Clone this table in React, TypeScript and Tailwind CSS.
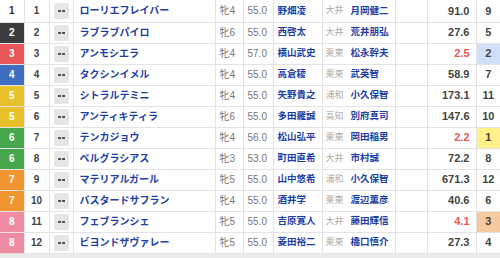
import React from 'react';

interface Runner {
  waku: number;
  num: number;
  name: string;
  sex: string;
  weight: string;
  jockey: string;
  region: string;
  trainer: string;
  odds: string;
  pop: number;
}

const runners: Runner[] = [
  { waku: 1, num: 1, name: 'ローリエフレイバー', sex: '牝4', weight: '55.0', jockey: '野畑凌', region: '大井', trainer: '月岡健二', odds: '91.0', pop: 9 },
  { waku: 2, num: 2, name: 'ラブラブパイロ', sex: '牝6', weight: '55.0', jockey: '西啓太', region: '大井', trainer: '荒井朋弘', odds: '27.6', pop: 5 },
  { waku: 3, num: 3, name: 'アンモシエラ', sex: '牝4', weight: '57.0', jockey: '横山武史', region: '栗東', trainer: '松永幹夫', odds: '2.5', pop: 2 },
  { waku: 4, num: 4, name: 'タクシンイメル', sex: '牝4', weight: '55.0', jockey: '高倉稜', region: '栗東', trainer: '武英智', odds: '58.9', pop: 7 },
  { waku: 5, num: 5, name: 'シトラルテミニ', sex: '牝4', weight: '55.0', jockey: '矢野貴之', region: '浦和', trainer: '小久保智', odds: '173.1', pop: 11 },
  { waku: 5, num: 6, name: 'アンティキティラ', sex: '牝6', weight: '55.0', jockey: '多田羅誠', region: '高知', trainer: '別府真司', odds: '147.6', pop: 10 },
  { waku: 6, num: 7, name: 'テンカジョウ', sex: '牝4', weight: '56.0', jockey: '松山弘平', region: '栗東', trainer: '岡田稲男', odds: '2.2', pop: 1 },
  { waku: 6, num: 8, name: 'ベルグラシアス', sex: '牝3', weight: '53.0', jockey: '町田直希', region: '大井', trainer: '市村誠', odds: '72.2', pop: 8 },
  { waku: 7, num: 9, name: 'マテリアルガール', sex: '牝5', weight: '55.0', jockey: '山中悠希', region: '浦和', trainer: '小久保智', odds: '671.3', pop: 12 },
  { waku: 7, num: 10, name: 'バスタードサフラン', sex: '牝4', weight: '55.0', jockey: '酒井学', region: '栗東', trainer: '渡辺薫彦', odds: '40.6', pop: 6 },
  { waku: 8, num: 11, name: 'フェブランシェ', sex: '牝5', weight: '55.0', jockey: '吉原寛人', region: '大井', trainer: '藤田輝信', odds: '4.1', pop: 3 },
  { waku: 8, num: 12, name: 'ビヨンドザヴァレー', sex: '牝5', weight: '55.0', jockey: '菱田裕二', region: '栗東', trainer: '橋口慎介', odds: '27.3', pop: 4 },
];

const wakuClass: Record<number, string> = {
  1: 'bg-white text-[#333]',
  2: 'bg-[#3d3d3d] text-white',
  3: 'bg-[#e8585a] text-white',
  4: 'bg-[#3f6ec0] text-white',
  5: 'bg-[#e9c22b] text-white',
  6: 'bg-[#46a84b] text-white',
  7: 'bg-[#f0952f] text-white',
  8: 'bg-[#f08ca1] text-white',
};

const popClass: Record<number, string> = {
  1: 'bg-[#fff08a]',
  2: 'bg-[#cfe0f8]',
  3: 'bg-[#f6c9a0]',
};

const font = { fontFamily: '"Liberation Sans", "Noto Sans CJK JP", sans-serif' };

export default function App() {
  return (
    <div className="w-[500px] h-[258px] bg-[#ececec] overflow-hidden" style={font}>
      <table className="w-[500px] table-fixed border-collapse bg-white">
        <colgroup>
          <col className="w-[24px]" />
          <col className="w-[25px]" />
          <col className="w-[24px]" />
          <col className="w-[142px]" />
          <col className="w-[28px]" />
          <col className="w-[30px]" />
          <col className="w-[49px]" />
          <col className="w-[73px]" />
          <col className="w-[32px]" />
          <col className="w-[49px]" />
          <col className="w-[24px]" />
        </colgroup>
        <tbody>
          {runners.map((r) => (
            <tr key={r.num} className="h-[21px] border-b border-[#e3e3e3] first:h-[22px]">
              <td className={`p-0 text-center text-[10px] font-bold ${wakuClass[r.waku]}`}>{r.waku}</td>
              <td className="p-0 text-center text-[10px] font-bold text-[#444] border-x border-[#e3e3e3]">{r.num}</td>
              <td className="p-0 border-r border-[#e3e3e3]">
                <div className="mx-auto flex h-[16px] w-[15px] items-center justify-center gap-[1px] rounded-[2px] bg-[#e6e6e6]">
                  <span className="h-[2px] w-[3px] bg-[#555]" />
                  <span className="h-[2px] w-[3px] bg-[#555]" />
                </div>
              </td>
              <td className="p-0 pl-[6px] text-[10px] font-bold whitespace-nowrap overflow-hidden text-[#1d3fa5] border-r border-[#e3e3e3]">
                {r.name}
              </td>
              <td className="p-0 pl-[4px] text-[10px] text-[#777] border-r border-[#e3e3e3]">{r.sex}</td>
              <td className="p-0 pl-[4px] text-[10px] text-[#777] border-r border-[#e3e3e3]">{r.weight}</td>
              <td className="p-0 pl-[4px] text-[9.5px] font-bold text-[#1d3fa5] whitespace-nowrap border-r border-[#e3e3e3]">
                {r.jockey}
              </td>
              <td className="p-0 pl-[3px] whitespace-nowrap border-r border-[#e3e3e3]">
                <div className="flex items-center gap-[7px]">
                  <span className="text-[9px] text-[#aaa]">{r.region}</span>
                  <span className="text-[9.5px] font-bold text-[#1d3fa5]">{r.trainer}</span>
                </div>
              </td>
              <td className="p-0 border-r border-[#e3e3e3]"></td>
              <td
                className={`p-0 pr-[6px] text-right text-[11px] font-bold border-r border-[#e3e3e3] ${
                  r.pop <= 3 ? 'text-[#e8575a]' : 'text-[#444]'
                }`}
              >
                {r.odds}
              </td>
              <td className={`p-0 text-center text-[11px] font-bold text-[#444] ${popClass[r.pop] ?? ''}`}>{r.pop}</td>
            </tr>
          ))}
        </tbody>
      </table>
    </div>
  );
}
